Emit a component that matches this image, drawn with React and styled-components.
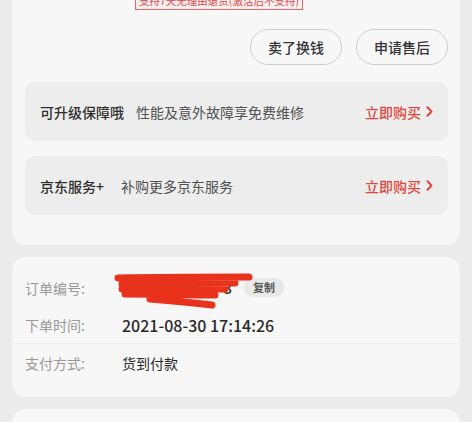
import React from "react";
import styled, { createGlobalStyle } from "styled-components";

const Global = createGlobalStyle`
  html, body {
    margin: 0;
    padding: 0;
    background: #ebebeb;
    font-family: "Noto Sans CJK SC", "Noto Sans", sans-serif;
    overflow: hidden;
  }
`;

const Page = styled.div`
  display: flex;
  flex-direction: column;
  gap: 12px;
  padding: 0 12px;
  width: 472px;
  box-sizing: border-box;
`;

const Card = styled.section`
  background: #f7f7f7;
  border-radius: ${(p) => (p.$cut ? "0 0 14px 14px" : "14px")};
  padding: ${(p) => p.$pad};
`;

const BadgeRow = styled.div`
  display: flex;
  padding-left: 110px;
  margin-top: -8px;
`;

const Badge = styled.span`
  display: inline-block;
  height: 16px;
  line-height: 16px;
  padding: 0 3px;
  border: 1px solid #e06b66;
  background: #fbeeee;
  color: #df4a45;
  font-size: 10.5px;
  white-space: nowrap;
`;

const Actions = styled.div`
  display: flex;
  justify-content: flex-end;
  gap: 14px;
  margin-top: 19px;
`;

const PillButton = styled.button`
  width: 92px;
  height: 36px;
  border-radius: 18px;
  border: 1px solid #cdcdcd;
  background: transparent;
  color: #333;
  font-family: inherit;
  font-size: 14px;
  font-weight: 500;
  padding: 0;
`;

const ServiceList = styled.div`
  display: flex;
  flex-direction: column;
  gap: 15px;
  margin-top: 17px;
`;

const ServiceRow = styled.div`
  display: flex;
  align-items: center;
  height: 59px;
  padding: 0 15px;
  background: #ededed;
  border-radius: 10px;
`;

const ServiceTitle = styled.span`
  color: #2e2e2e;
  font-size: 14px;
  font-weight: 500;
  margin-right: ${(p) => p.$gap}px;
`;

const ServiceDesc = styled.span`
  color: #505050;
  font-size: 14px;
  flex: 1;
`;

const BuyLink = styled.span`
  display: flex;
  align-items: center;
  gap: 5px;
  color: #e0463c;
  font-size: 14px;
  font-weight: 500;
`;

const Chevron = () => (
  <svg width="7" height="11" viewBox="0 0 7 11" fill="none">
    <path d="M1.5 1.2 L5.5 5.5 L1.5 9.8" stroke="#e0463c" strokeWidth="2" strokeLinecap="round" strokeLinejoin="round" />
  </svg>
);

const InfoRow = styled.div`
  display: flex;
  align-items: center;
  height: 37px;
  padding: 0 13px;
  border-bottom: ${(p) => (p.$line ? "1px solid #ededed" : "none")};
`;

const Label = styled.span`
  width: 97px;
  flex: none;
  color: #9a9a9a;
  font-size: 14px;
`;

const Value = styled.span`
  color: #2a2a2a;
  font-size: ${(p) => (p.$num ? "16px" : "14px")};
  font-weight: ${(p) => (p.$num ? 500 : 400)};
`;

const Redacted = styled.span`
  position: relative;
  display: flex;
  justify-content: space-between;
  width: 116px;
  padding-right: 6px;
  box-sizing: border-box;
  color: #333;
  font-size: 15px;
  font-weight: 500;
`;

const Scribble = styled.svg`
  position: absolute;
  left: -6px;
  top: -4px;
  overflow: visible;
`;

const CopyTag = styled.span`
  margin-left: 6px;
  height: 19px;
  line-height: 19px;
  padding: 0 9px;
  border-radius: 9px;
  background: #e8e8e8;
  color: #555;
  font-size: 11px;
  font-weight: 600;
`;

const services = [
  { title: "可升级保障哦", desc: "性能及意外故障享免费维修", gap: 12 },
  { title: "京东服务+", desc: "补购更多京东服务", gap: 17 },
];

export default function App() {
  return (
    <>
      <Global />
      <Page>
        <Card $cut $pad="0 12px 30px 13px">
          <BadgeRow>
            <Badge>支持7天无理由退货(激活后不支持)</Badge>
          </BadgeRow>
          <Actions>
            <PillButton>卖了换钱</PillButton>
            <PillButton>申请售后</PillButton>
          </Actions>
          <ServiceList>
            {services.map((s) => (
              <ServiceRow key={s.title}>
                <ServiceTitle $gap={s.gap}>{s.title}</ServiceTitle>
                <ServiceDesc>{s.desc}</ServiceDesc>
                <BuyLink>
                  立即购买
                  <Chevron />
                </BuyLink>
              </ServiceRow>
            ))}
          </ServiceList>
        </Card>

        <Card $pad="12px 0 16px">
          <InfoRow>
            <Label>订单编号:</Label>
            <Redacted>
              <span>2</span>
              <span>3</span>
              <Scribble width="140" height="40" viewBox="0 0 140 40">
                <path
                  d="M2 5 C45 4 90 4 133 4 M6 11 C50 10 90 10 119 10 M6 16 C40 16 80 16 109 16 M9 21 C50 21 80 22 99 22 M34 26 C60 28 80 30 96 32"
                  stroke="#e8321c"
                  strokeWidth="7"
                  strokeLinecap="round"
                  fill="none"
                />
              </Scribble>
            </Redacted>
            <CopyTag>复制</CopyTag>
          </InfoRow>
          <InfoRow $line>
            <Label>下单时间:</Label>
            <Value $num>2021-08-30 17:14:26</Value>
          </InfoRow>
          <InfoRow>
            <Label>支付方式:</Label>
            <Value>货到付款</Value>
          </InfoRow>
        </Card>

        <Card $pad="0" style={{ height: 40 }} />
      </Page>
    </>
  );
}
